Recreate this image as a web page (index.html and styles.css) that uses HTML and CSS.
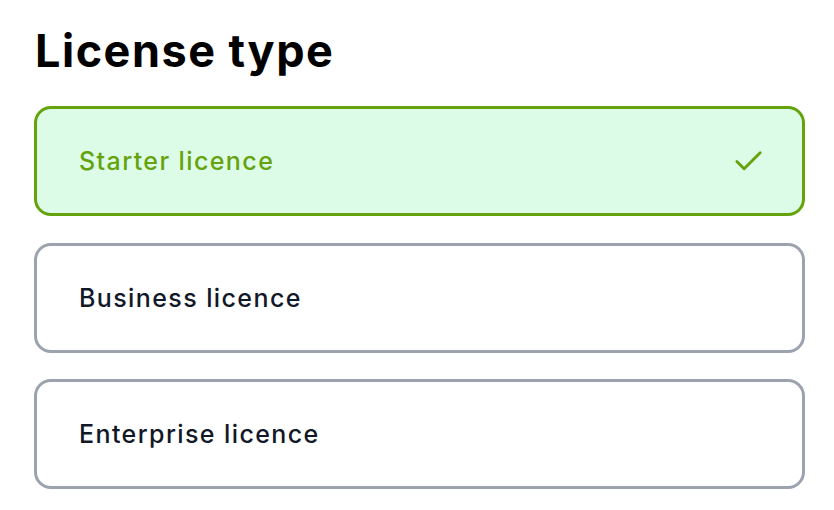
FILE: index.html
```html
<!DOCTYPE html>
<html lang="en">
<head>
<meta charset="utf-8">
<title>License type</title>
<link rel="stylesheet" href="styles.css">
</head>
<body>
<main class="page">
  <h1 class="title">License type</h1>
  <div class="options" role="radiogroup">
    <div class="option option--selected" role="radio" aria-checked="true">
      <span class="option__label">Starter licence</span>
      <svg class="option__check" viewBox="0 0 24 24" width="35" height="35" fill="none" stroke="currentColor" stroke-width="2" stroke-linecap="round" stroke-linejoin="round" aria-hidden="true"><polyline points="20 6 9 17 4 12"/></svg>
    </div>
    <div class="option" role="radio" aria-checked="false">
      <span class="option__label">Business licence</span>
    </div>
    <div class="option" role="radio" aria-checked="false">
      <span class="option__label">Enterprise licence</span>
    </div>
  </div>
</main>
</body>
</html>
```

FILE: styles.css
```css
* { box-sizing: border-box; }
html, body { margin: 0; background: #ffffff; }
body {
  font-family: Inter, "Noto Sans", "Liberation Sans", sans-serif;
  color: #111827;
}
.page {
  padding: 24px 29px 0 34px;
}
.title {
  margin: 0 0 0 1px;
  font-size: 45px;
  line-height: 54px;
  font-weight: 700;
  letter-spacing: 1.5px;
  color: #000000;
}
.options {
  margin-top: 28px;
  display: flex;
  flex-direction: column;
  gap: 26.5px;
}
.option {
  height: 110px;
  border: 3px solid #9ca3af;
  border-radius: 17px;
  background: #ffffff;
  display: flex;
  align-items: center;
  justify-content: space-between;
  padding: 0 36px 0 42px;
}
.option__label {
  font-size: 25px;
  font-weight: 500;
  line-height: 32px;
  letter-spacing: 1.4px;
  color: #111827;
}
.option--selected {
  border-color: #65a30d;
  background: #dcfce7;
}
.option--selected .option__label {
  color: #65a30d;
}
.option__check {
  color: #65a30d;
  display: block;
}
```
